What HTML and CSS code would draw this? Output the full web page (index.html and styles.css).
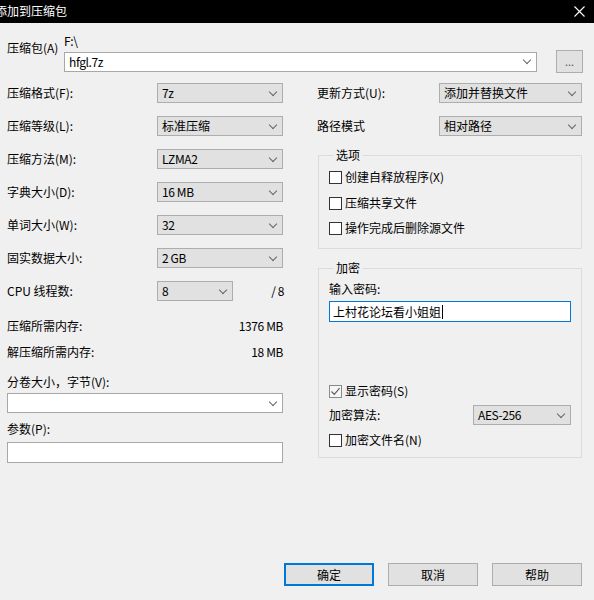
FILE: index.html
```html
<!DOCTYPE html>
<html lang="zh-CN">
<head>
<meta charset="utf-8">
<title>添加到压缩包</title>
<link rel="stylesheet" href="styles.css">
</head>
<body>
<div class="window">
  <div class="titlebar">
    <span class="title">添加到压缩包</span>
    <svg class="close" width="11" height="11" viewBox="0 0 11 11"><path d="M0.5 0.5 L10.5 10.5 M10.5 0.5 L0.5 10.5" stroke="#fff" stroke-width="1.1" fill="none"/></svg>
  </div>
  <div class="content">
    <div class="archive-row">
      <div class="archive-label">压缩包(A)</div>
      <div class="archive-main">
        <div class="path lat">F:\</div>
        <div class="archive-inputs">
          <div class="combo edit archive-combo"><span class="val lat">hfgl.7z</span><span class="chev"></span></div>
          <div class="btn browse">...</div>
        </div>
      </div>
    </div>

    <div class="columns">
      <div class="left">
        <div class="row"><span class="lbl">压缩格式(F):</span><div class="combo sel w126"><span class="val lat">7z</span><span class="chev"></span></div></div>
        <div class="row"><span class="lbl">压缩等级(L):</span><div class="combo sel w126"><span class="val">标准压缩</span><span class="chev"></span></div></div>
        <div class="row"><span class="lbl">压缩方法(M):</span><div class="combo sel w126"><span class="val lat">LZMA2</span><span class="chev"></span></div></div>
        <div class="row"><span class="lbl">字典大小(D):</span><div class="combo sel w126"><span class="val lat">16 MB</span><span class="chev"></span></div></div>
        <div class="row"><span class="lbl">单词大小(W):</span><div class="combo sel w126"><span class="val lat">32</span><span class="chev"></span></div></div>
        <div class="row"><span class="lbl">固实数据大小:</span><div class="combo sel w126"><span class="val lat">2 GB</span><span class="chev"></span></div></div>
        <div class="row row-last"><span class="lbl">CPU 线程数:</span><div class="combo sel w76"><span class="val lat">8</span><span class="chev"></span></div><span class="threads lat">/ 8</span></div>

        <div class="mem mem1"><span>压缩所需内存:</span><span class="lat">1376 MB</span></div>
        <div class="mem mem2"><span>解压缩所需内存:</span><span class="lat">18 MB</span></div>

        <div class="caption vol-cap">分卷大小，字节(V):</div>
        <div class="combo edit full"><span class="val"></span><span class="chev"></span></div>
        <div class="caption par-cap">参数(P):</div>
        <div class="edit full params"></div>
      </div>

      <div class="right">
        <div class="row"><span class="lbl rl">更新方式(U):</span><div class="combo sel w144"><span class="val">添加并替换文件</span><span class="chev"></span></div></div>
        <div class="row"><span class="lbl rl">路径模式</span><div class="combo sel w144"><span class="val">相对路径</span><span class="chev"></span></div></div>

        <fieldset class="group options">
          <legend>选项</legend>
          <div class="check c1"><span class="box"></span><span>创建自释放程序(X)</span></div>
          <div class="check c2"><span class="box"></span><span>压缩共享文件</span></div>
          <div class="check c3"><span class="box"></span><span>操作完成后删除源文件</span></div>
        </fieldset>

        <fieldset class="group encrypt">
          <legend>加密</legend>
          <div class="caption pw-cap">输入密码:</div>
          <div class="edit password"><span>上村花论坛看小姐姐</span><span class="caret"></span></div>
          <div class="check show"><span class="box checked"><svg width="11" height="11" viewBox="0 0 11 11"><path d="M1.5 5.5 L4.3 8.4 L9.6 2.2" stroke="#5a5a5a" stroke-width="1.1" fill="none"/></svg></span><span>显示密码(S)</span></div>
          <div class="algo-row"><span>加密算法:</span><div class="combo sel w98"><span class="val lat">AES-256</span><span class="chev"></span></div></div>
          <div class="check names"><span class="box"></span><span>加密文件名(N)</span></div>
        </fieldset>
      </div>
    </div>
  </div>

  <div class="footer">
    <div class="btn dlg default">确定</div>
    <div class="btn dlg">取消</div>
    <div class="btn dlg">帮助</div>
  </div>
</div>
</body>
</html>
```

FILE: styles.css
```css
* { box-sizing: border-box; }

html, body {
  margin: 0;
  padding: 0;
}

body {
  background: #f0f0f0;
  font-family: "Noto Sans CJK SC", sans-serif;
  font-size: 12px;
  line-height: 14px;
  color: #000;
}

.lat { letter-spacing: -0.4px; }

.window {
  width: 594px;
  height: 600px;
  display: flex;
  flex-direction: column;
  overflow: hidden;
}

.titlebar {
  height: 23px;
  background: #000;
  color: #fff;
  display: flex;
  align-items: center;
  justify-content: space-between;
  padding-right: 9px;
  flex-shrink: 0;
}

.title {
  margin-left: -5px;
  line-height: 14px;
  margin-top: -1px;
}

.close { display: block; margin-top: -1px; }

.content {
  padding: 0 11px 0 7px;
}

/* archive row */
.archive-row {
  display: flex;
  margin-top: 11px;
}

.archive-label {
  width: 57px;
  padding-top: 7px;
}

.archive-main { flex: 1; }

.path { height: 14px; margin-bottom: 2px; }

.archive-inputs {
  display: flex;
  align-items: center;
  gap: 19px;
}

.archive-combo { width: 473px; }

.browse {
  width: 27px;
  height: 23px;
  border-color: #c4c4c4;
  background: #e5e5e5;
  color: #555;
  font-size: 11px;
  line-height: 19px;
}

/* generic controls */
.combo {
  height: 20px;
  display: flex;
  align-items: center;
  justify-content: space-between;
  padding: 0 5px 0 4px;
}

.sel {
  background: #e1e1e1;
  border: 1px solid #adadad;
}

.edit {
  background: #fff;
  border: 1px solid #a8a8a8;
}

.val { white-space: nowrap; }

.chev {
  width: 9px;
  height: 5px;
  position: relative;
  flex-shrink: 0;
}

.chev::before {
  content: "";
  position: absolute;
  left: 2px;
  top: -2px;
  width: 5px;
  height: 5px;
  border-right: 1px solid #666;
  border-bottom: 1px solid #666;
  transform: rotate(45deg);
}

.w126 { width: 126px; }
.w76 { width: 76px; }
.w144 { width: 144px; }
.w98 { width: 98px; }

.btn {
  border: 1px solid #adadad;
  background: #e1e1e1;
  display: flex;
  align-items: center;
  justify-content: center;
}

/* columns */
.columns {
  display: flex;
  margin-top: 10px;
  gap: 34px;
}

.left {
  width: 276px;
  display: flex;
  flex-direction: column;
}

.right {
  width: 265px;
  display: flex;
  flex-direction: column;
}

.row {
  display: flex;
  align-items: center;
  height: 20px;
  margin-bottom: 13px;
}

.row-last { margin-bottom: 0; }

.lbl { width: 150px; flex-shrink: 0; }
.rl { width: 122px; }

.threads {
  flex: 1;
  text-align: right;
  margin-right: -1px;
}

.mem {
  display: flex;
  justify-content: space-between;
  align-items: center;
  height: 14px;
}
.mem1 { margin-top: 18px; }
.mem2 { margin-top: 12px; }

.caption { height: 14px; }
.vol-cap { margin-top: 16px; margin-bottom: 4px; }
.full { width: 276px; }
.par-cap { margin-top: 9px; margin-bottom: 6px; }
.params { height: 21px; }

/* group boxes */
.group {
  margin: 0;
  border: 1px solid #dcdcdc;
  padding: 0 10px 0 10px;
  min-width: 0;
  margin-left: 1px;
}

.group legend {
  padding: 0 2px;
  margin-left: 5px;
  line-height: 14px;
  height: 14px;
}

.options {
  margin-top: -1px;
  padding-bottom: 13px;
}

.check {
  display: flex;
  align-items: center;
  height: 14px;
  gap: 3px;
}

.box {
  width: 13px;
  height: 13px;
  border: 1px solid #333;
  background: #fff;
  flex-shrink: 0;
  display: flex;
  align-items: center;
  justify-content: center;
}

.box.checked { border-color: #8a8a8a; background: #f6f6f6; }
.box svg { display: block; }

.c1 { margin-top: 8px; }
.c2 { margin-top: 12px; }
.c3 { margin-top: 11px; }

.encrypt {
  margin-top: 12px;
  padding-bottom: 10px;
}

.pw-cap { margin-top: 7px; }

.password {
  margin-top: 5px;
  height: 21px;
  border: 1px solid #0078d7;
  display: flex;
  align-items: center;
  padding-left: 3px;
}

.caret {
  width: 1px;
  height: 14px;
  background: #000;
  margin-left: 1px;
}

.show { margin-top: 62px; }

.algo-row {
  display: flex;
  justify-content: space-between;
  align-items: center;
  height: 20px;
  margin-top: 7px;
}

.names { margin-top: 8px; }

/* footer */
.footer {
  margin-top: auto;
  display: flex;
  justify-content: flex-end;
  gap: 14px;
  padding: 0 12px 14px 0;
}

.dlg {
  width: 90px;
  height: 23px;
}

.default {
  border: 2px solid #0078d7;
}
```
